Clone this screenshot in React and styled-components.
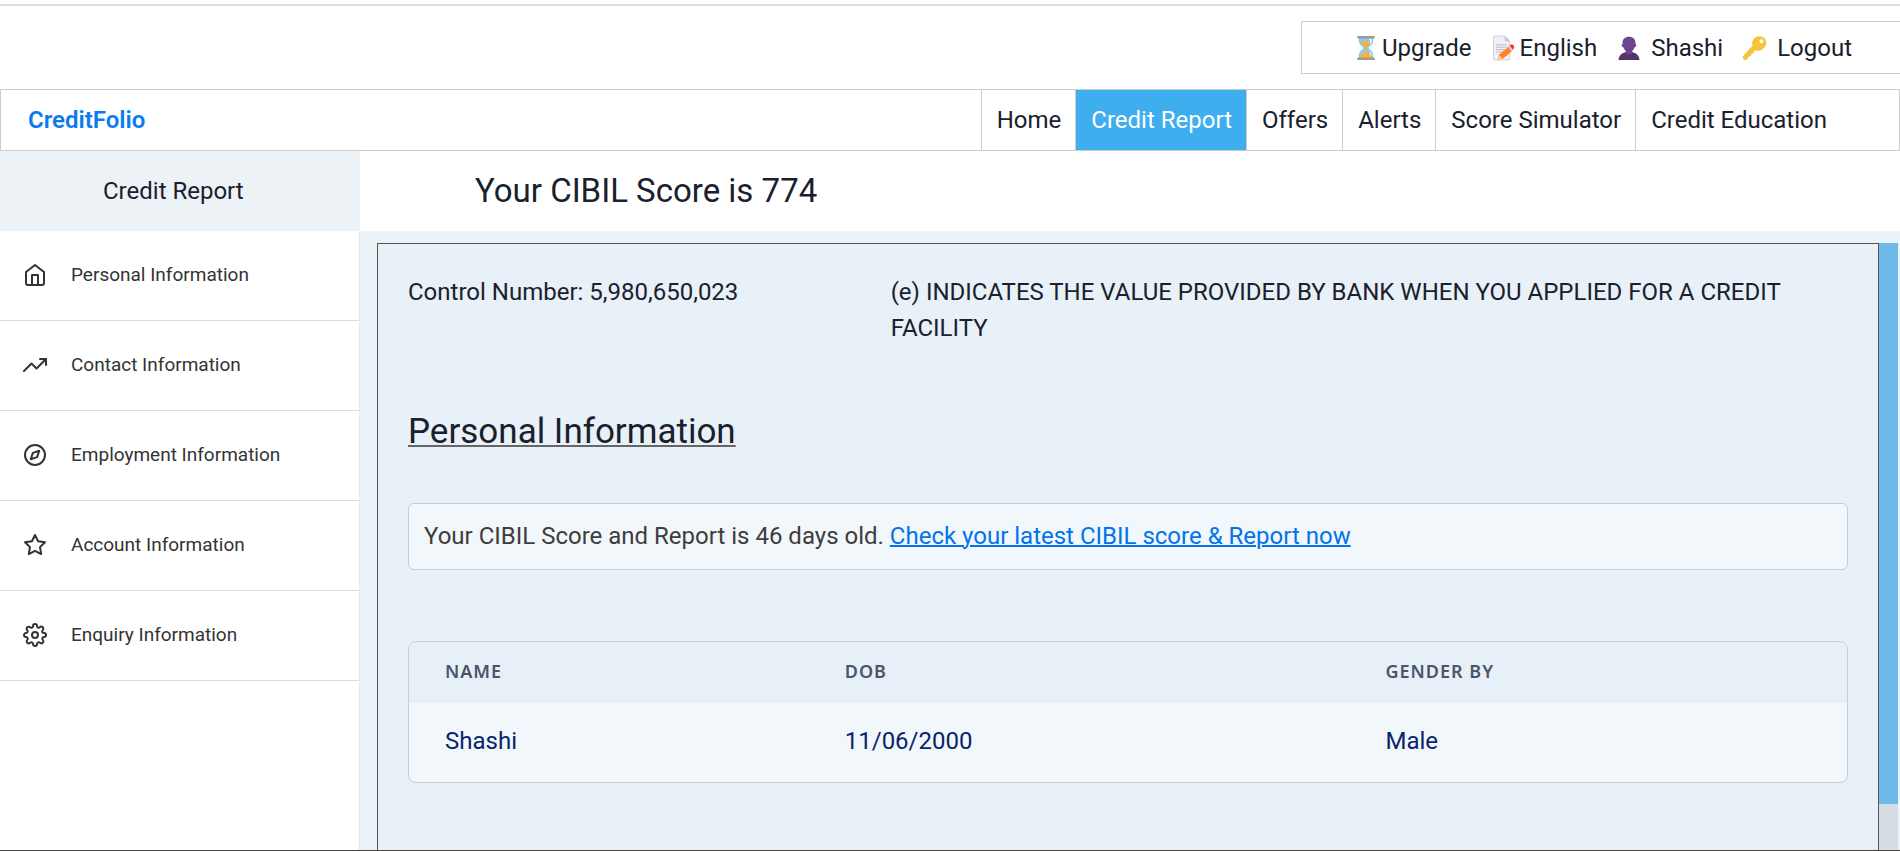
import React from "react";
import styled, { createGlobalStyle } from "styled-components";
import { FiHome, FiTrendingUp, FiCompass, FiStar, FiSettings } from "react-icons/fi";

const navItems = ["Home", "Credit Report", "Offers", "Alerts", "Score Simulator", "Credit Education"];

const sideItems = [
    { name: "Personal Information", icon: FiHome },
    { name: "Contact Information", icon: FiTrendingUp },
    { name: "Employment Information", icon: FiCompass },
    { name: "Account Information", icon: FiStar },
    { name: "Enquiry Information", icon: FiSettings },
];

const Hourglass = () => (
    <Emoji viewBox="-4 0 40 32" aria-hidden="true">
        <path d="M7 3h18v4c0 4-3 6-6 9 3 3 6 5 6 9v4H7v-4c0-4 3-6 6-9-3-3-6-5-6-9z" fill="#83CBFF" />
        <path d="M9 8h14c-1 4-5 5-6 8v5c3 1 6 3 6 6v2H9v-2c0-3 3-5 6-6v-5c-1-3-5-4-6-8z" fill="#FFB02E" />
        <path d="M20 4h3v4c0 2-1 3-2 4 1-3 0-5-1-8zM20 20c2 1 3 3 3 5l-1 2c0-3-1-5-2-7z" fill="#FFF" />
        <rect x="5" y="1" width="22" height="3" rx="1" fill="#9B9B9B" />
        <rect x="5" y="28" width="22" height="3" rx="1" fill="#9B9B9B" />
    </Emoji>
);

const Memo = () => (
    <Emoji viewBox="-4 0 40 32" aria-hidden="true">
        <path d="M4 1h13l6 6v24H4c-1 0-1-1-1-1V2c0-1 1-1 1-1z" fill="#F3EEF8" stroke="#CDC4D6" />
        <path d="M17 1v5c0 1 1 2 2 2h5z" fill="#CDC4D6" />
        <path d="M6 12h14M6 15h14M6 18h11M6 21h8" stroke="#B4ACBC" strokeWidth="1" />
        <path d="M10 24l12-10 4 6-11 9-7 2z" fill="#FF822D" />
        <path d="M10 25l4 4-6 2z" fill="#FFCE7C" />
        <path d="M21 14l2-2 5 6-3 2z" fill="#D3D3D3" />
        <path d="M23 13c1-2 4-2 5 0s1 3-1 5z" fill="#F8312F" />
    </Emoji>
);

const Person = () => (
    <Emoji viewBox="-4 0 40 32" aria-hidden="true">
        <path d="M3 31c0-6 5-9 9-10h8c4 1 9 4 9 10z" fill="#533566" />
        <path d="M12 17h8v6c-2 2-6 2-8 0z" fill="#6D4590" />
        <path d="M16 2c5 0 8 3 8 7v2c2 1 1 4-1 4-1 4-4 6-7 6s-6-2-7-6c-2 0-3-3-1-4V9c0-4 3-7 8-7z" fill="#6D4590" />
    </Emoji>
);

const Key = () => (
    <Emoji viewBox="-4 0 40 32" aria-hidden="true">
        <path
            d="M28 4c-4-4-10-3-13 0-3 3-3 6-2 9L2 25c-2 2-1 6 2 6 2 0 3-1 3-3l1-1c2 0 3-1 3-3 2 0 3-1 3-3l3-2c4 1 8 0 11-4 3-3 3-8 0-11zm-4 6a2 2 0 1 1 0-5 2 2 0 0 1 0 5z"
            fill="#F9C23C"
            fillRule="evenodd"
        />
    </Emoji>
);

const App = () => {
    return (
        <Page>
            <GlobalStyle />
            <TopBar>
                <TopMenu>
                    <TopLink href="#upgrade"><Hourglass />Upgrade</TopLink>
                    <TopLink href="#language"><Memo />English</TopLink>
                    <TopLink href="#profile" $spaced><Person />Shashi</TopLink>
                    <TopLink href="#logout" $spaced><Key />Logout</TopLink>
                </TopMenu>
            </TopBar>
            <NavBar>
                <Brand href="#home">CreditFolio</Brand>
                <NavList>
                    {navItems.map((item) => (
                        <NavLink key={item} href="#nav" $active={item === "Credit Report"}>{item}</NavLink>
                    ))}
                </NavList>
            </NavBar>
            <Body>
                <SideBar>
                    <SideTitle>Credit Report</SideTitle>
                    <SideList>
                        {sideItems.map(({ name, icon: Icon }) => (
                            <SideLink key={name} href="#section">
                                <Icon size={24} />
                                {name}
                            </SideLink>
                        ))}
                    </SideList>
                </SideBar>
                <Main>
                    <ScoreTitle>Your CIBIL Score is 774</ScoreTitle>
                    <ReportArea>
                        <Report>
                            <ControlRow>
                                <p>Control Number: 5,980,650,023</p>
                                <p>(e) INDICATES THE VALUE PROVIDED BY BANK WHEN YOU APPLIED FOR A CREDIT FACILITY</p>
                            </ControlRow>
                            <SectionTitle>Personal Information</SectionTitle>
                            <Notice>
                                Your CIBIL Score and Report is 46 days old.{" "}
                                <a href="#refresh">Check your latest CIBIL score &amp; Report now</a>
                            </Notice>
                            <TableBox>
                                <Table>
                                    <thead>
                                        <tr>
                                            <th>NAME</th>
                                            <th>DOB</th>
                                            <th>GENDER BY</th>
                                        </tr>
                                    </thead>
                                    <tbody>
                                        <tr>
                                            <td>Shashi</td>
                                            <td>11/06/2000</td>
                                            <td>Male</td>
                                        </tr>
                                    </tbody>
                                </Table>
                            </TableBox>
                        </Report>
                        <ScrollTrack>
                            <ScrollThumb />
                        </ScrollTrack>
                    </ReportArea>
                </Main>
            </Body>
        </Page>
    );
};

const GlobalStyle = createGlobalStyle`

    * {
        box-sizing: border-box;
        margin: 0;
        padding: 0;
    }

    body {
        font-family: Roboto, sans-serif;
        font-size: 24px;
        line-height: 36px;
        color: #1a202c;
        background-color: white;
    }

    a {
        color: inherit;
        text-decoration: none;
    }

`;

const Page = styled.div`

    height: 100vh;
    display: flex;
    flex-direction: column;
    overflow: hidden;
    border-bottom: 1px solid #444;

`;

const TopBar = styled.header`

    display: flex;
    justify-content: flex-end;
    margin-top: 4px;
    padding: 15px 0;
    border-top: 2px solid #ddd;

`;

const TopMenu = styled.div`

    display: flex;
    gap: 16px;
    padding: 8px 48px 7px;
    border: 1px solid #ccc;
    border-right: none;

`;

const TopLink = styled.a`

    display: flex;
    align-items: center;
    gap: ${(props) => (props.$spaced ? "6px" : "0")};

`;

const Emoji = styled.svg`
    width: 32px;
    height: 26px;
`;

const NavBar = styled.nav`

    display: flex;
    justify-content: space-between;
    height: 62px;
    flex-shrink: 0;
    border: 1px solid #ccc;

`;

const Brand = styled.a`

    display: flex;
    align-items: center;
    padding-left: 27px;
    font-weight: 600;
    color: #0a7cf0;

`;

const NavList = styled.div`

    display: flex;

    a:last-child {
        padding-right: 72px;
    }

`;

const NavLink = styled.a`

    display: flex;
    align-items: center;
    padding: 0 14px 0 15px;
    border-left: 1px solid #ccc;
    color: ${(props) => (props.$active ? "white" : "#1a202c")};
    background-color: ${(props) => (props.$active ? "#3eaeef" : "white")};

`;

const Body = styled.div`

    display: flex;
    flex: 1;
    min-height: 0;

`;

const SideBar = styled.aside`

    width: 360px;
    flex-shrink: 0;
    display: flex;
    flex-direction: column;

`;

const SideTitle = styled.h2`

    padding: 22px 103px;
    font-size: 24px;
    font-weight: 400;
    background-color: #ecf2f6;

`;

const SideList = styled.nav`
    flex: 1;
    border-right: 1px solid #e2e8f0;
`;

const SideLink = styled.a`

    display: flex;
    align-items: center;
    gap: 24px;
    height: 90px;
    padding: 0 23px 2px;
    border-bottom: 1px solid #ddd;
    font-size: 19px;
    color: #333;

`;

const Main = styled.main`

    flex: 1;
    min-width: 0;
    display: flex;
    flex-direction: column;
    background-color: #ecf2f6;

`;

const ScoreTitle = styled.h1`

    padding: 16px 115px;
    font-size: 33px;
    font-weight: 400;
    line-height: 48px;
    background-color: white;

`;

const ReportArea = styled.div`

    flex: 1;
    min-height: 0;
    display: flex;
    margin: 12px 2px 0 17px;

`;

const Report = styled.section`

    flex: 1;
    padding: 30px;
    border: 1px solid #555;
    border-bottom: none;
    background-color: #e8f0f8;
    overflow: hidden;

`;

const ControlRow = styled.div`

    display: grid;
    grid-template-columns: 1fr 2fr;
    gap: 4px;

`;

const SectionTitle = styled.h2`

    margin: 59px 0 44px;
    font-size: 35px;
    font-weight: 400;
    line-height: 54px;
    text-decoration: underline;
    text-decoration-color: #666;
    text-decoration-thickness: 2px;
    text-underline-offset: 2px;
    text-decoration-skip-ink: none;

`;

const Notice = styled.p`

    padding: 14px 15px 15px;
    border: 1px solid #ccc;
    border-radius: 6px;
    color: #3d3d3d;
    background-color: #f2f7fb;

    a {
        color: #0074e8;
        text-decoration: underline;
        text-decoration-thickness: 2px;
    }

`;

const TableBox = styled.div`

    margin-top: 71px;
    border: 1px solid #ccc;
    border-radius: 8px;
    background-color: #f2f7fb;
    overflow: hidden;

`;

const Table = styled.table`

    width: 100%;
    table-layout: fixed;
    border-collapse: collapse;
    text-align: left;

    th {
        height: 61px;
        padding: 0 0 4px 36px;
        font-family: "Noto Sans", sans-serif;
        font-size: 18px;
        font-weight: 600;
        letter-spacing: 1px;
        color: #4a5568;
        background-color: #e8f0f7;
    }

    th:nth-child(1) {
        width: 27.8%;
    }

    th:nth-child(2) {
        width: 37.6%;
    }

    td {
        height: 79px;
        padding: 0 0 3px 36px;
        color: #0a246a;
    }

`;

const ScrollTrack = styled.div`
    width: 19px;
    background-color: #d5dde4;
`;

const ScrollThumb = styled.div`
    height: 92.5%;
    background-color: #6db9ea;
`;

export default App;
